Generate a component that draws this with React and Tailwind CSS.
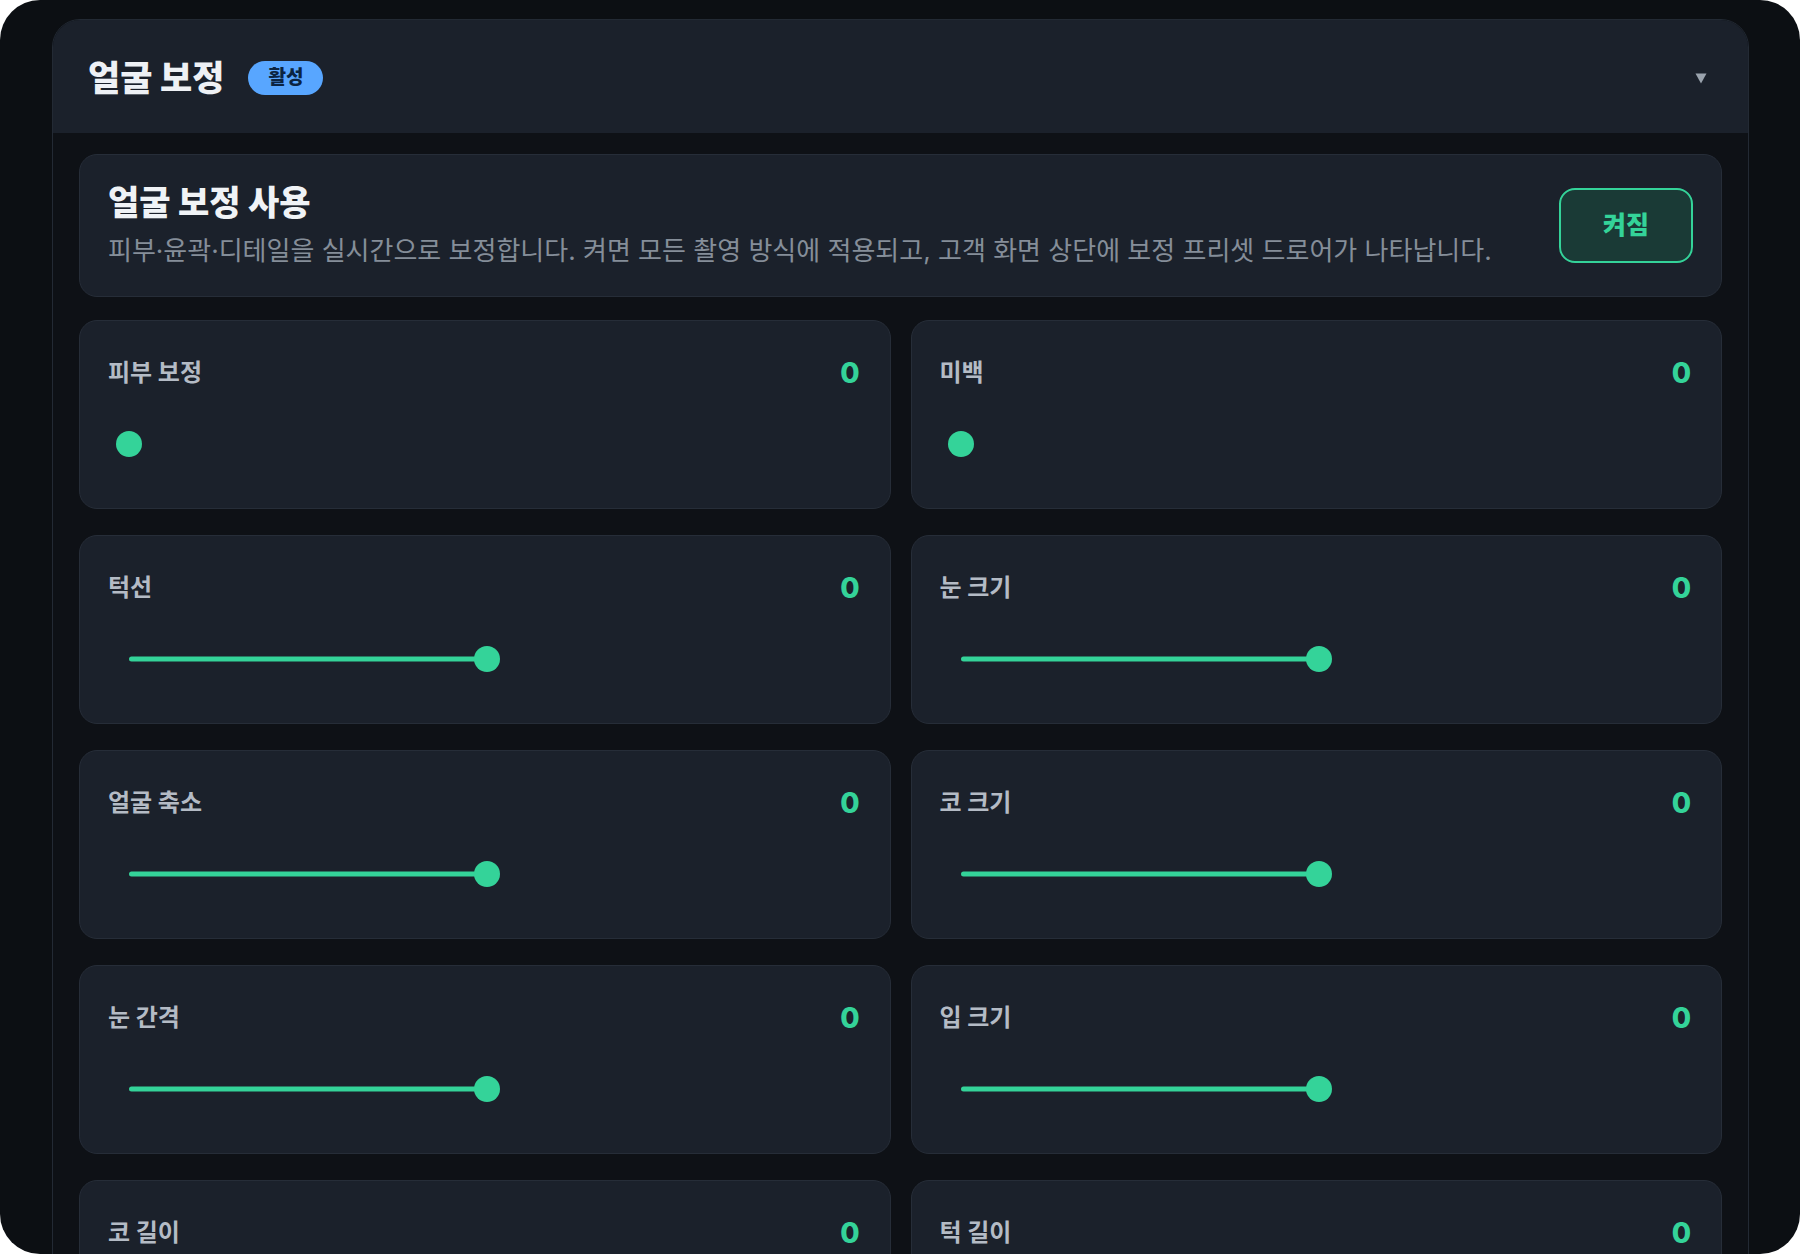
import React from "react";

const rows = [
  [
    { label: "피부 보정", pos: 0 },
    { label: "미백", pos: 0 },
  ],
  [
    { label: "턱선", pos: 0.5 },
    { label: "눈 크기", pos: 0.5 },
  ],
  [
    { label: "얼굴 축소", pos: 0.5 },
    { label: "코 크기", pos: 0.5 },
  ],
  [
    { label: "눈 간격", pos: 0.5 },
    { label: "입 크기", pos: 0.5 },
  ],
  [
    { label: "코 길이", pos: 0.5 },
    { label: "턱 길이", pos: 0.5 },
  ],
];

function Slider({ pos }) {
  const W = 742;
  const thumb = 26;
  const center = thumb / 2 + pos * (W - thumb);
  return (
    <div className="relative ml-[8px] h-[26px] w-[742px]">
      {pos > 0 && (
        <div
          className="absolute top-1/2 h-[5px] -translate-y-1/2 rounded-full bg-[#34d399]"
          style={{ left: thumb / 2, width: center - thumb / 2 }}
        />
      )}
      <div
        className="absolute top-0 h-[26px] w-[26px] rounded-full bg-[#34d399]"
        style={{ left: center - thumb / 2 }}
      />
    </div>
  );
}

function Card({ label, pos }) {
  return (
    <div className="h-[189px] rounded-[18px] border border-[#262d38] bg-[#1b212b] pl-7 pr-[30px] pt-[35px]">
      <div className="flex h-[34px] items-center justify-between">
        <span className="text-[24px] font-bold leading-[34px] text-[#b4bbc5]">{label}</span>
        <span className="font-[Inter,sans-serif] text-[28px] font-extrabold leading-[34px] text-[#34d399]">0</span>
      </div>
      <div className="mt-[41px]">
        <Slider pos={pos} />
      </div>
    </div>
  );
}

export default function App() {
  return (
    <div className="h-[1254px] w-[1800px] bg-white font-[Inter,'Noto_Sans_CJK_KR',sans-serif]">
      <div className="h-[1254px] w-[1800px] overflow-hidden rounded-[40px] bg-[#0c0f13] pl-[52px] pr-[51px] pt-[19px]">
        <div className="h-[1300px] overflow-hidden rounded-t-[28px] border border-[#232a34] bg-[#0e1116]">
          <div className="flex h-[113px] items-center bg-[#1b212b] pl-[35px] pr-[34px] pt-[3px]">
            <h1 className="text-[35px] font-extrabold leading-[40px] text-[#eef1f5]">얼굴 보정</h1>
            <span className="ml-[24px] flex h-[34px] w-[75px] items-center justify-center rounded-full bg-[#58a6ff] text-[19px] font-extrabold text-[#0b2442]">
              활성
            </span>
            <div className="ml-auto flex h-[26px] w-[26px] items-center justify-center">
              <svg width="12" height="11" viewBox="0 0 12 11">
                <path d="M0.5 0.5 H11.5 L6 10.5 Z" fill="#9aa3ad" />
              </svg>
            </div>
          </div>
          <div className="px-[26px] pt-[21px]">
            <div className="flex items-center justify-between rounded-[18px] border border-[#262d38] bg-[#1b212b] py-[28px] pl-7 pr-7">
              <div>
                <div className="text-[34px] font-extrabold leading-[40px] text-[#f0f3f6]">얼굴 보정 사용</div>
                <div className="mt-[11px] text-[26px] leading-[34px] text-[#858e99]">
                  피부·윤곽·디테일을 실시간으로 보정합니다. 켜면 모든 촬영 방식에 적용되고, 고객 화면 상단에 보정 프리셋 드로어가 나타납니다.
                </div>
              </div>
              <button className="flex h-[75px] w-[134px] items-center justify-center rounded-[16px] border-2 border-[#34d399] bg-[#1a3a36] text-[25px] font-extrabold text-[#34d399]">
                켜짐
              </button>
            </div>
            <div className="mt-[23px] grid grid-cols-2 gap-x-[20px] gap-y-[26px]">
              {rows.flat().map((c) => (
                <Card key={c.label} label={c.label} pos={c.pos} />
              ))}
            </div>
          </div>
        </div>
      </div>
    </div>
  );
}
